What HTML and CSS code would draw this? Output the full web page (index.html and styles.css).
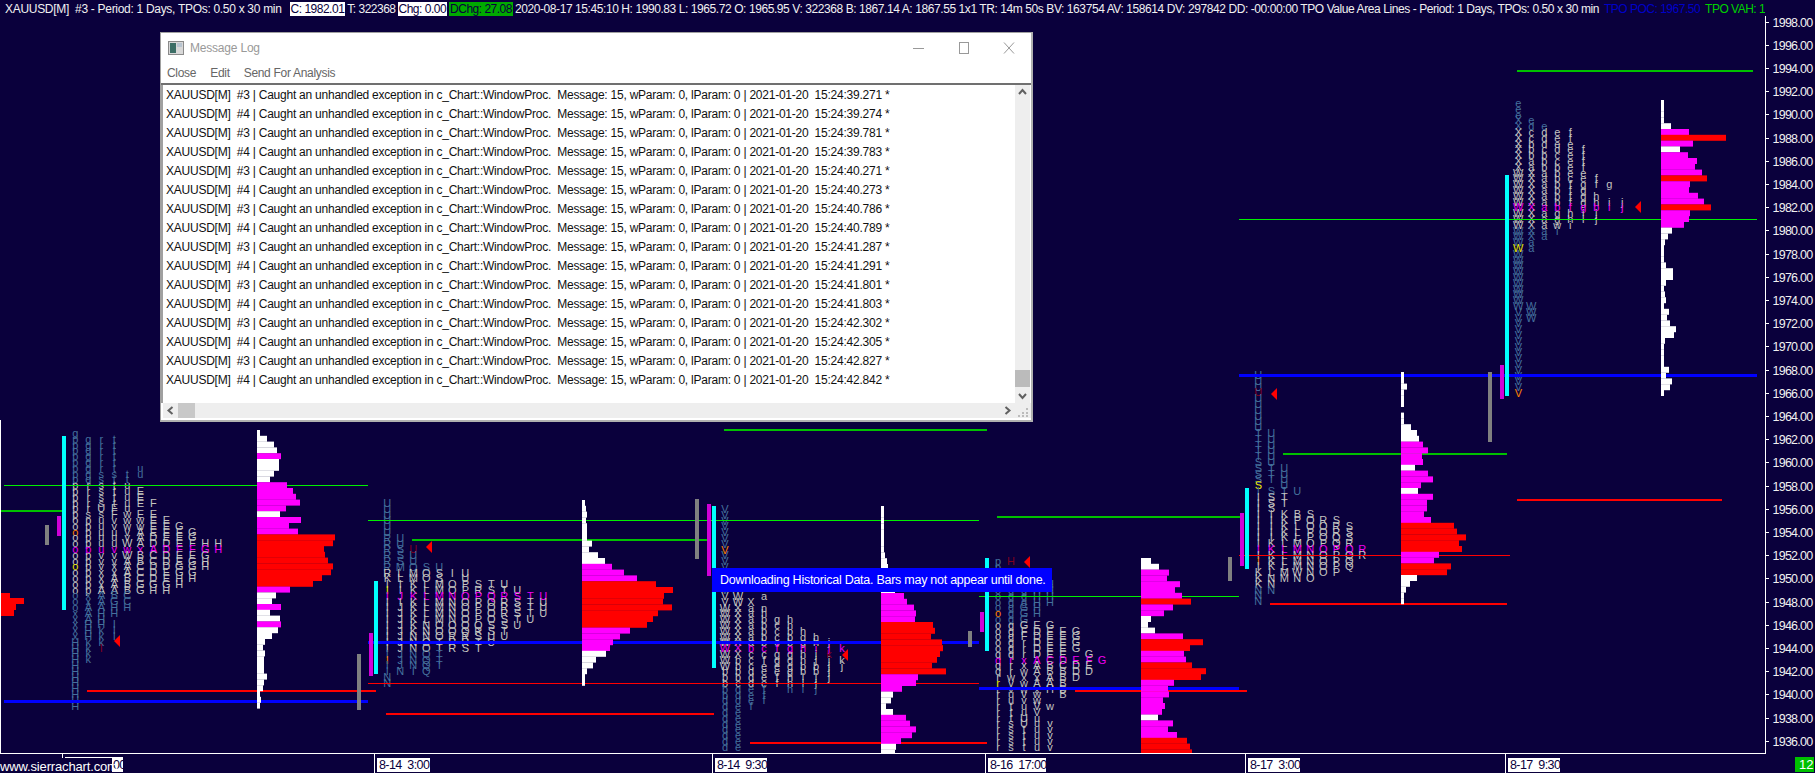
FILE: index.html
```html
<!DOCTYPE html>
<html lang="en">
<head>
    <meta charset="UTF-8">
    <title>XAUUSD[M] - Sierra Chart</title>
    <link rel="stylesheet" href="styles.css">
</head>
<body>
    <div class="app">
        <svg id="chart" class="chart" width="1815" height="773" xmlns="http://www.w3.org/2000/svg"></svg>

        <div class="topbar">
            <span class="first">XAUUSD[M]  #3 - Period: 1 Days, TPOs: 0.50 x 30 min</span>
            <span class="box box-white gap-l">C: 1982.01</span>
            <span>T: 322368</span>
            <span class="box box-white">Chg: 0.00</span>
            <span class="box box-green">DChg: 27.08</span>
            <span class="long">2020-08-17 15:45:10 H: 1990.83 L: 1965.72 O: 1965.95 V: 322368 B: 1867.14 A: 1867.55 1x1 TR: 14m 50s BV: 163754 AV: 158614 DV: 297842 DD: -00:00:00 TPO Value Area Lines - Period: 1 Days, TPOs: 0.50 x 30 min</span>
            <span class="txt-blue gap-s">TPO POC: 1967.50</span>
            <span class="txt-green gap-s">TPO VAH: 1982.00</span>
        </div>

        <div class="msg-window">
            <div class="msg-title">
                <svg class="msg-icon" width="16" height="16" viewBox="0 0 16 16">
                    <rect x="0.5" y="1.5" width="15" height="13" fill="#d8d8d8" stroke="#8a8a8a"/>
                    <rect x="2" y="3" width="6" height="10" fill="#3c6e66"/>
                    <rect x="9" y="3" width="5" height="4" fill="#b8c4d0"/>
                </svg>
                <span class="msg-title-text">Message Log</span>
                <div class="win-btns">
                    <svg width="14" height="14" viewBox="0 0 14 14"><path d="M1 7.5h11" stroke="#999" fill="none"/></svg>
                    <svg width="14" height="14" viewBox="0 0 14 14"><rect x="2.5" y="1.5" width="9" height="11" stroke="#999" fill="none"/></svg>
                    <svg width="14" height="14" viewBox="0 0 14 14"><path d="M2 1.5l10 11M12 1.5l-10 11" stroke="#999" fill="none"/></svg>
                </div>
            </div>
            <div class="msg-menu">
                <span>Close</span>
                <span>Edit</span>
                <span>Send For Analysis</span>
            </div>
            <div class="msg-body">
                <div class="msg-list" id="msgList"></div>
                <div class="vscroll">
                    <svg width="15" height="15" viewBox="0 0 15 15"><path d="M4 9l3.5-4 3.5 4" stroke="#606060" stroke-width="2" fill="none"/></svg>
                    <div class="vscroll-track"><div class="vscroll-thumb"></div></div>
                    <svg width="15" height="15" viewBox="0 0 15 15"><path d="M4 6l3.5 4 3.5-4" stroke="#606060" stroke-width="2" fill="none"/></svg>
                </div>
            </div>
            <div class="hscroll">
                <svg width="15" height="15" viewBox="0 0 15 15"><path d="M9.5 4l-4 3.5 4 3.5" stroke="#606060" stroke-width="2" fill="none"/></svg>
                <div class="hscroll-thumb"></div>
                <div class="hscroll-track"></div>
                <svg width="15" height="15" viewBox="0 0 15 15"><path d="M5.5 4l4 3.5-4 3.5" stroke="#606060" stroke-width="2" fill="none"/></svg>
                <svg class="grip" width="15" height="15" viewBox="0 0 15 15"><path d="M10 5h2v2h-2zM6 9h2v2H6zM10 9h2v2h-2zM2 12h2v2H2zM6 12h2v2H6zM10 12h2v2h-2z" fill="#bbb"/></svg>
            </div>
        </div>

        <div class="banner">Downloading Historical Data. Bars may not appear until done.</div>
    </div>

    <script src="chart.js"></script>
</body>
</html>
```

FILE: styles.css
```css
* { box-sizing: border-box; }
html, body { margin: 0; padding: 0; background: #0a003c; }
.app { position: relative; width: 1815px; height: 773px; overflow: hidden; background: #0a003c; font-family: "Liberation Sans", Arial, sans-serif; }
.chart { position: absolute; left: 0; top: 0; }

.topbar { position: relative; display: flex; align-items: center; width: 1765px; height: 17px; padding-left: 5px; gap: 2px; overflow: hidden; color: #f0f0f0; font-size: 12px; letter-spacing: -0.5px; white-space: pre; }
.topbar span { flex: none; }
.topbar .first { letter-spacing: -0.3px; }
.topbar .long { letter-spacing: -0.42px; }
.gap-l { margin-left: 6px; }
.gap-s { margin-left: 3px; }
.box { height: 14px; line-height: 14px; padding: 0 1px; }
.box-white { background: #fff; color: #0a003c; }
.box-green { background: #00aa00; color: #0a003c; }
.txt-blue { color: #0000c8; }
.txt-green { color: #00d000; }

.msg-window { position: absolute; left: 160px; top: 32px; width: 873px; height: 390px; display: flex; flex-direction: column; background: #fff; border: 1px solid #a0a0a0; border-bottom: 2px solid #b0b0b0; border-right: 2px solid #b0b0b0; font-size: 12px; color: #111; }
.msg-title { display: flex; align-items: center; height: 29px; flex: none; padding: 0 15px 0 7px; color: #999; }
.msg-icon { margin: 0 6px 0 0; }
.msg-title-text { font-size: 12px; letter-spacing: -0.2px; }
.win-btns { display: flex; gap: 31px; margin-left: auto; }
.msg-menu { display: flex; gap: 14px; height: 23px; flex: none; align-items: center; padding-left: 6px; font-size: 12px; letter-spacing: -0.3px; color: #666; border-bottom: 2px solid #707070; }
.msg-body { display: flex; flex: 1; min-height: 0; border-left: 2px solid #a0a0a0; }
.msg-list { flex: 1; padding: 1px 0 0 3px; overflow: hidden; }
.msg-row { height: 19px; line-height: 19px; white-space: pre; letter-spacing: -0.235px; }
.vscroll { display: flex; flex-direction: column; width: 15px; background: #eee; margin-right: 1px; }
.vscroll-track { flex: 1; position: relative; display: flex; flex-direction: column; justify-content: flex-end; padding-bottom: 1px; }
.vscroll-thumb { height: 17px; background: #bbb; }
.hscroll { display: flex; align-items: center; height: 15px; flex: none; margin: 0 0 2px 2px; background: #eee; }
.hscroll-thumb { width: 17px; height: 15px; background: #c8c8c8; }
.hscroll-track { flex: 1; }
.grip { margin-left: 1px; }

.banner { position: absolute; left: 712px; top: 568px; width: 340px; height: 24px; line-height: 24px; padding-left: 8px; background: #0000ff; color: #fff; font-size: 12.5px; white-space: nowrap; letter-spacing: -0.26px; }

.tpo { font-family: "Liberation Sans", Arial, sans-serif; font-size: 11px; text-anchor: middle; }
.tpo-dim { fill: #44709c; }
.tpo-va { fill: #c4c4c0; }
.tpo-poc { fill: #f000f0; }
.tpo-open { fill: #ff8000; }
.tpo-close { fill: #e8e800; }
.tpo-dark { fill: #800020; }

.white { fill: #fff; }
.magenta { fill: #ff00ff; }
.red { fill: #ff0000; }
.cyan { fill: #00ffff; }
.purple { fill: #d000d8; }
.gray { fill: #808080; }
.green { fill: #00c000; }
.lime { fill: #00f000; }
.blue { fill: #0000ff; }
.bg-site { fill: #0a003c; }

.axis-label { font-size: 12.5px; fill: #f0f0f0; letter-spacing: -0.75px; }
.date-box { fill: #fff; }
.date-label { font-size: 12.5px; fill: #0a003c; white-space: pre; letter-spacing: -0.6px; }
.site-label { font-size: 13px; fill: #fff; letter-spacing: -0.15px; }
.badge-label { font-size: 13px; fill: #fff; }
```

FILE: chart.js
```js
// profiles: x0/y0 = first letter column and first row, va = rows drawn light, rows = histogram, cols = [startRow, letter runs]
var ROW = 5.8;
var COL = 13;

var profiles = [
    { x0: 75.3, y0: 430, base: 257, poc: 20, va: [9, 27], pocLetters: 'opuvwxADFFGH',
      rows: 'w3 w10 w17 w20 m24 w22 w22 w17 w13 m30 m36 m39 m43 m29 w23 m44 m32 m41 r78 r76 r67 r68 r71 r76 r74 r65 r56 m33 w19 w15 m24 w13 w23 m24 w21 w15 w8 w6 w8 w7*3 w10 w7 w6 w3 w4 w3',
      cols: [
        [0, 'g1 p14 o16 x5 H12'], [1, 'g7 q1 r5 s1 p13 x2 A3 H3 k4'], [1, 'r6 s6 U1 s1 u5 v4 x3 A4 H3 k3'],
        [1, 't6 s1 t5 F2 v2 u3 v3 x2 A3 B1 G1 H2 .1 I3'], [7, 't2 u5 w3 v2 W3 A3 B3 C2 H1'],
        [6, 'u2 .2 E3 .1 E1 w2 A3 x1 B2 C3 G2'], [12, 'F1 .1 E4 D2 A1 C2 D3 G1 H1'], [15, 'E4 D5 E2 G1 H1'],
        [16, 'G1 E6 G2 H2'], [17, 'G2 F2 E1 G3 H1'], [19, 'H2 G1 H2'], [19, 'H2']
      ],
      marks: [[0, 17, 'tpo-open'], [0, 23, 'tpo-close'], [2, 37, 'tpo-dark', 'I']],
      tri: [114, 641],
      bars: [[62, 436, 610, 'cyan'], [57, 516, 536, 'purple'], [45, 525, 545, 'gray']] },

    { x0: 387.3, y0: 500, base: 582, poc: 16, va: [12, 25], pocLetters: 'IJKLMNOPQRSTU',
      rows: 'w3 w4 w5 w4 w5 w5 w5 w10 w7 w16 w23 m30 m42 m55 r74 r91 r82 r81 r90 r76 r71 r65 m48 m38 m31 m28 w24 w14 w11 w5 w3 w3',
      cols: [
        [0, 'U6 R7 K1 I16 N2'], [6, 'U2 S3 M1 L2 I4 J11 N1'], [8, 'U3 O1 M2 K9 N6 I1'], [11, 'S1 O2 L7 N3 O2 Q4'],
        [11, 'U1 S2 M7 O3 T5'], [12, 'I1 .1 O3 N4 O2 R3'], [12, 'U2 P3 O4 Q2 R2 S1'], [14, 'S1 R2 P4 Q1 R1 S1 T2'],
        [14, 'T1 S2 O4 S2 U2'], [14, 'U1 T2 R3 S2 T1 U1'], [15, 'U1 S4 T1 U1'], [16, 'T4 U1'], [16, 'U4']
      ],
      marks: [[0, 15, 'tpo-close'], [0, 27, 'tpo-open'], [2, 8, 'tpo-dark']],
      tri: [426, 547],
      bars: [[374, 581, 674, 'cyan'], [369, 633, 676, 'purple'], [357, 654, 710, 'gray']] },

    { x0: 725, y0: 506, base: 881, poc: 24, va: [15, 30], pocLetters: 'WXbcfghijk',
      rows: 'w3*8 w4 w6 w7 w8 w10 w12 w14 m23 m26 m33 m35 m34 r52 r54 r50 r61 r62 r59 r56 r51 r65 m37 m35 m21 w12 w10 w5 w12 m25 m29 m35 m31 m20 w15 w14',
      cols: [
        [0, 'V17 W11 b5 d9'], [15, 'W2 X9 b4 c1 d3 e10'], [16, 'X1 a7 b1 c3 d3 e3 f1'], [15, 'a1 .1 n1 h1 b5 c2 f1 e4 f3'],
        [19, 'g1 c4 f1 g2 e2 f2'], [19, 'h2 b3 g1 g4 h3'], [21, 'h1 g2 b1 h2 b2 i3'], [22, 'h2 i1 j2 b2 j3'],
        [23, 'j1 j1 k1 j4'], [24, 'k1 .1 k1 j1']
      ],
      marks: [[0, 7, 'tpo-open'], [8, 25, 'tpo-dark']],
      tri: [842, 655],
      bars: [[712, 506, 668, 'cyan'], [707, 504, 576, 'purple'], [695, 499, 559, 'gray']] },

    { x0: 998, y0: 558, base: 1141, poc: 17, va: [11, 34], pocLetters: 'qrxACDEFG',
      rows: 'w10 w18 m28 m26 m39 m34 m41 r50 m32 m23 w10 w7 w14 m42 r62 r49 m43 m45 r51 r65 r60 m33 m27 m28 m22 m24 m21 w17 m32 m27 m36 r46 r49 r51',
      cols: [
        [0, 'p3 o13 q4 r14'], [0, 'H1 .2 o2 g11 q1 r3 w1 v2 u2 t3 s7'], [3, 'g5 G4 F2 r3 x2 w1 x1 w2 v2 u2 U2 t6'],
        [3, 'H7 .1 E1 D5 A3 x1 A1 x1 w2 V2 u8'], [4, 'H4 .3 G1 E5 C1 B2 A2 H1 .2 w1 .2 v5'], [12, 'E5 D1 C1 B5'],
        [12, 'G4 .1 E1 D3'], [16, 'G1 F1 E1 D1'], [17, 'G1']
      ],
      marks: [[0, 9, 'tpo-open'], [0, 21, 'tpo-close'], [1, 0, 'tpo-dark']],
      tri: [1024, 562],
      bars: [[985, 558, 651, 'cyan'], [980, 612, 632, 'purple'], [968, 631, 647, 'gray']] },

    { x0: 1258.3, y0: 372, base: 1401, poc: 30, va: [21, 36], pocLetters: 'IKLMNOPQR',
      rows: 'w3*2 w6 w3*3 w0 w3*2 w10 w16 w18 m22 m27 m21 m22 w14 m27 m32 m20 w17 m32 m26 m26 m23 m30 r53 r56 r65 r58 r61 m38 m33 r50 r46 w16 w9 w5 w3*2',
      cols: [
        [0, 'U10 T5 S5 I14 K3 N3'], [10, 'U6 T3 .1 S4 I5 K5 L1 N3'], [16, 'U4 T3 .1 K5 L5 M2'], [20, 'U1 .3 B1 P1 L3 M5 W1 N1'],
        [24, 'S1 O2 P2 O1 N5 O1'], [25, 'R1 O3 P1 O5'], [25, 'S1 R2 Q2 P5'], [26, 'S3 R1 Q4'], [30, 'R2']
      ],
      marks: [[0, 3, 'tpo-dark'], [0, 19, 'tpo-close'], [0, 32, 'tpo-open']],
      tri: [1271, 394],
      bars: [[1245, 488, 569, 'cyan'], [1240, 513, 566, 'purple'], [1228, 557, 581, 'gray']] },

    { x0: 1518.3, y0: 100, base: 1661, poc: 18, va: [5, 21], pocLetters: 'WXabfgbij',
      rows: 'w3*4 w10 m28 r65 m32 w19 m27 m36 m34 m41 r46 m29 m28 m37 m43 r50 m29 m28 m23 w11 w7 w4 w3*3 w5 w12*2 w5 w3 w4 w5 w3 w8 w6 w9 w15 w13 w4 w3*4 w8 w5 w11 w9 w3',
      cols: [
        [0, 'e3 X9 W24 V15'], [3, 'e1 d1 c2 b3 a2 X12 a2 .9 W3'], [4, 'e1 d3 c1 b3 a12'], [5, 'e3 d1 c2 b8 g2 w1 i1'],
        [5, 'f2 e6 c1 f5 h2 i1'], [8, 'f4 e2 g4 g1 i2'], [13, 'f2 .1 h2 b1 j2'], [14, 'g1 .2 i2'], [17, 'j2']
      ],
      marks: [[0, 50, 'tpo-open'], [0, 25, 'tpo-close']],
      tri: [1635, 207],
      bars: [[1505, 175, 396, 'cyan'], [1500, 365, 399, 'purple'], [1488, 372, 442, 'gray']] }
];

// x1, x2, y, height, class
var lines = [
    [1, 62, 510, 2, 'green'], [4, 368, 485, 1, 'lime'], [87, 376, 690, 2, 'red'], [4, 368, 700, 3, 'blue'],
    [368, 979, 520, 1, 'lime'], [412, 707, 539, 2, 'green'], [368, 979, 641, 3, 'blue'], [368, 979, 683, 1, 'red'],
    [386, 714, 713, 2, 'red'], [750, 987, 742, 2, 'red'], [724, 987, 429, 2, 'green'],
    [997, 1241, 516, 2, 'green'], [979, 1239, 596, 1, 'lime'], [979, 1239, 687, 3, 'blue'], [1075, 1247, 690, 2, 'red'],
    [1239, 1510, 555, 1, 'red'], [1283, 1507, 453, 2, 'green'], [1270, 1507, 603, 2, 'red'],
    [1517, 1722, 499, 2, 'red'], [1239, 1757, 219, 1, 'lime'], [1239, 1757, 374, 3, 'blue'], [1517, 1753, 70, 2, 'green']
];

var redBlock = [[593, 9], [598, 23], [604, 15], [610, 13]];

var svg = document.getElementById('chart');

function add(name, attrs, text) {
    var el = document.createElementNS('http://www.w3.org/2000/svg', name);
    for (var key in attrs) el.setAttribute(key, attrs[key]);
    if (text !== undefined) el.textContent = text;
    svg.appendChild(el);
    return el;
}

function rect(x, y, w, h, cls) {
    return add('rect', { x: x, y: y, width: w, height: h, 'class': cls });
}

function parseRows(str) {
    var out = [];
    str.split(' ').forEach(function (tok) {
        var parts = tok.substring(1).split('*');
        var n = parts[1] ? parseInt(parts[1]) : 1;
        for (var i = 0; i < n; i++) out.push([tok[0], parseInt(parts[0])]);
    });
    return out;
}

function drawLetters(p) {
    p.cols.forEach(function (col, c) {
        var row = col[0];
        col[1].split(' ').forEach(function (run) {
            var n = parseInt(run.substring(1));
            for (var i = 0; i < n; i++, row++) {
                var y = p.y0 + row * ROW + ROW / 2 + 4;
                if (run[0] == '.' || y > 756) continue;
                var letter = run[0];
                var cls = row >= p.va[0] && row <= p.va[1] ? 'tpo-va' : 'tpo-dim';
                if (row == p.poc) {
                    letter = p.pocLetters[c];
                    cls = 'tpo-poc';
                }
                p.marks.forEach(function (m) {
                    if (m[0] == c && m[1] == row) cls = m[2];
                });
                add('text', { x: p.x0 + c * COL, y: y, 'class': 'tpo ' + cls }, letter);
            }
        });
    });
    p.marks.forEach(function (m) {
        if (m[3]) add('text', { x: p.x0 + m[0] * COL, y: p.y0 + m[1] * ROW + ROW / 2 + 4, 'class': 'tpo ' + m[2] }, m[3]);
    });
}

function drawProfile(p) {
    parseRows(p.rows).forEach(function (r, i) {
        var y = p.y0 + i * ROW;
        if (r[1] == 0 || y >= 753) return;
        var cls = r[0] == 'w' ? 'white' : r[0] == 'm' ? 'magenta' : 'red';
        rect(p.base, y, r[1], Math.min(ROW + 0.2, 753 - y), cls);
    });
}

function drawAxis() {
    rect(1765, 16, 1, 738, 'white');
    rect(0, 420, 1, 333, 'white');
    rect(0, 753, 1766, 1, 'white');
    for (var price = 1998; price >= 1936; price -= 2) {
        var y = 68 + (1994 - price) * 11.6;
        rect(1765, Math.round(y), 4, 1, 'white');
        add('text', { x: 1772.5, y: y + 5, 'class': 'axis-label' }, price.toFixed(2));
    }

    [62, 374, 712, 985, 1245, 1505].forEach(function (x) {
        rect(x, 753, 1, 20, 'white');
    });

    [[377, '8-14  3:00', 53], [715, '8-14  9:30', 52], [988, '8-16  17:00', 58], [1248, '8-17  3:00', 52], [1508, '8-17  9:30', 52]].forEach(function (d) {
        rect(d[0], 758, d[2], 14, 'date-box');
        add('text', { x: d[0] + 2, y: 769, 'class': 'date-label' }, d[1]);
    });

    rect(112, 757, 11, 15, 'date-box');
    add('text', { x: 113, y: 769, 'class': 'date-label' }, '00');
    rect(0, 758, 112, 15, 'bg-site');
    rect(65, 757, 47, 1, 'white');
    add('text', { x: 0, y: 771, 'class': 'site-label' }, 'www.sierrachart.com');

    rect(1795, 757, 19, 15, 'green');
    add('text', { x: 1799, y: 769, 'class': 'badge-label' }, '12');
}

profiles.forEach(drawLetters);

lines.forEach(function (l) {
    rect(l[0], l[2], l[1] - l[0], l[3], l[4]);
});

redBlock.forEach(function (b) {
    rect(1, b[0], b[1], 6, 'red');
});

profiles.forEach(function (p) {
    p.bars.forEach(function (b) {
        rect(b[0], b[1], 4, b[2] - b[1], b[3]);
    });
    drawProfile(p);
    var tx = p.tri[0], ty = p.tri[1];
    add('path', { d: 'M' + tx + ' ' + ty + 'l6 -6v12z', 'class': 'red' });
});

drawAxis();

// message log rows
var list = document.getElementById('msgList');
var stamps = ['39.271', '39.274', '39.781', '39.783', '40.271', '40.273', '40.786', '40.789', '41.287', '41.291', '41.801', '41.803', '42.302', '42.305', '42.827', '42.842'];
stamps.forEach(function (s, i) {
    var row = document.createElement('div');
    row.className = 'msg-row';
    row.textContent = 'XAUUSD[M]  #' + (i % 2 ? 4 : 3) + ' | Caught an unhandled exception in c_Chart::WindowProc.  Message: 15, wParam: 0, lParam: 0 | 2021-01-20  15:24:' + s + ' *';
    list.appendChild(row);
});
```
